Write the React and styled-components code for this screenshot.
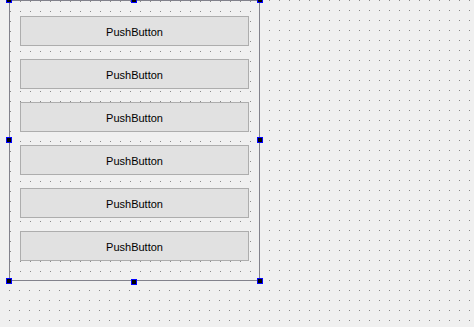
import React from 'react'
import styled, { createGlobalStyle } from 'styled-components'

const GlobalStyle = createGlobalStyle`
    html, body {
        margin:0;
        padding:0;
        background:#f0f0f0;
    }
`

// 1px dot every 10px, drawn at (9,9) of each tile
const dots = `
    background-color:#8a8a8a;
    background-image:
        linear-gradient(90deg, #f0f0f0 9px, transparent 9px),
        linear-gradient(#f0f0f0 9px, transparent 9px);
    background-size:10px 10px;
`

const Canvas = styled.div`
    ${dots}
    background-position:0px 1px;
    width:474px;
    height:327px;
    padding-left:9px;
    box-sizing:border-box;
    overflow:hidden;
`

const Form = styled.div`
    ${dots}
    background-position:1px 1px;
    position:relative;
    width:251px;
    height:281px;
    box-sizing:border-box;
    border:1px solid #82828c;
    padding:15px 10px 0 10px;
    display:flex;
    flex-direction:column;
    gap:13px;
`

const PushButton = styled.button`
    height:30px;
    width:100%;
    margin:0;
    padding:2px 0 0 0;
    box-sizing:border-box;
    background:#e1e1e1;
    border:1px solid #adadad;
    border-radius:0;
    font-family:"Liberation Sans", Arial, sans-serif;
    font-size:11px;
    color:#000;
    display:flex;
    align-items:center;
    justify-content:center;
`

const Handle = styled.div`
    position:absolute;
    left:${p => p.$x}px;
    top:${p => p.$y}px;
    width:4px;
    height:4px;
    background:#000;
    border:1px solid #0000ff;
`

const handles = [
    [-4, -4], [121, -4], [247, -4],
    [-4, 136], [247, 136],
    [-4, 277], [121, 278], [247, 277],
]

export default function App() {
    return (
        <>
            <GlobalStyle />
            <Canvas>
                <Form>
                    {[0, 1, 2, 3, 4, 5].map(i => (
                        <PushButton key={i}>PushButton</PushButton>
                    ))}
                    {handles.map(([x, y], i) => (
                        <Handle key={i} $x={x} $y={y} />
                    ))}
                </Form>
            </Canvas>
        </>
    )
}
